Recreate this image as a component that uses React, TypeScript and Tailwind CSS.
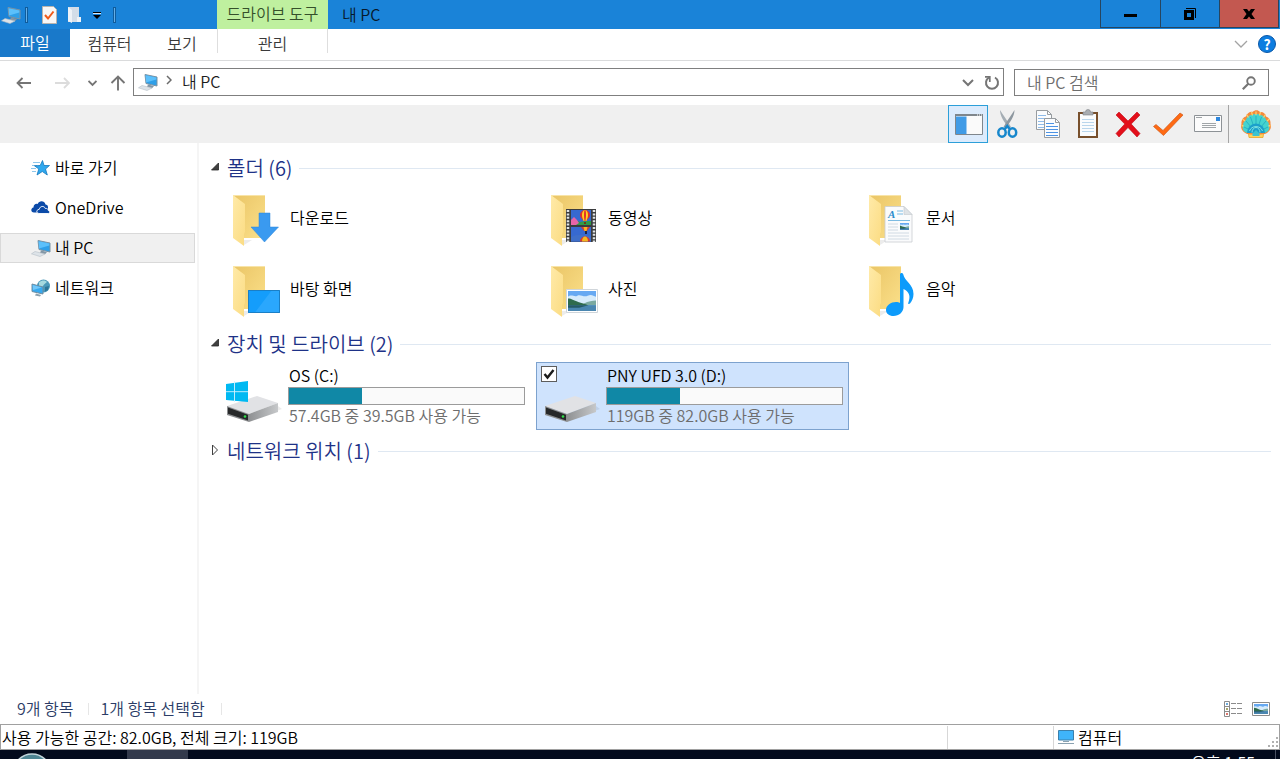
import * as React from "react";
import clsx from "clsx";

type IconProps = { className?: string };

function PcIcon({ className }: IconProps) {
   return (
      <svg viewBox="0 0 20 18" className={className} aria-hidden="true">
         <path d="M7 1.5 19 4v9L8 10.5z" fill="#2f9fe8" stroke="#7d93a3" strokeWidth="1" />
         <path d="M7.6 2.3 18.3 4.6v2L8 9.5z" fill="#5cc0fb" />
         <path d="m10 11.500 6 1.500-2 2.200-5-1.200z" fill="#8296a5" />
         <path d="m4 12.500 10 2.500-5 2.500L.5 14.800z" fill="#dde3e8" stroke="#b4bec6" strokeWidth=".6" />
      </svg>
   );
}

function StarIcon() {
   return (
      <svg viewBox="0 0 20 18" className="h-[18px] w-5" aria-hidden="true">
         <path d="M2 3.500h7M1 6.500h5M0 9.500h5M1 12.500h4" stroke="#8fc6ea" strokeWidth="1" />
         <path
            d="m11.500 1.500 1.500 5h5.500l-4 3.500 1.800 6-5-3.500-5.300 3.500 1.800-6L3.500 6.800l5.700-.3z"
            fill="#2fa8ee"
            stroke="#1577bd"
            strokeWidth=".8"
         />
      </svg>
   );
}

function OneDriveIcon() {
   return (
      <svg viewBox="0 0 20 18" className="h-[18px] w-5" aria-hidden="true">
         <path
            d="M3 13.500C-.5 13.500-.5 9 2.500 8.500c0-3 2.500-4.200 4.200-3.400C8 1.200 13.500 1.200 14.500 5.500c2.500.3 2.500 2 2.500 3v5z"
            fill="#0b4aa8"
         />
         <path
            d="M8 14.500c-3 0-3-4 .3-4.200.5-3.500 5-3.800 6-.8 2-.4 3 .8 3 2 2.200.6 1.700 3-.3 3z"
            fill="#0b4aa8"
            stroke="#fff"
            strokeWidth=".9"
         />
      </svg>
   );
}

function NetworkIcon() {
   return (
      <svg viewBox="0 0 20 18" className="h-[18px] w-5" aria-hidden="true">
         <circle cx="12.500" cy="7" r="6.500" fill="#4b98b8" />
         <path d="M8 3.500c3-3 7-2 8-.5l-3 2.500-2 3-3-1z" fill="#a6d9df" />
         <path d="m14 8 4-1-1 4-3 1.500z" fill="#2c7598" />
         <path d="m1 5 11 3v7L1 12.500z" fill="#37a9ef" stroke="#6f8da1" strokeWidth="1" />
         <path d="m1.700 6 9 2.500L2 11z" fill="#72c8fa" />
         <path d="m5 14.500 5 1.500-1 1.500-5-1z" fill="#8ca1ae" />
      </svg>
   );
}

function Landscape({ x, y, w, h }: { x: number; y: number; w: number; h: number }) {
   return (
      <svg x={x} y={y} width={w} height={h} viewBox="0 0 30 21" preserveAspectRatio="none">
         <path d="M0 0h30v21H0z" fill="#67a9f2" />
         <path d="M0 6c4-3 7 1 10-1s7 2 11 0 6 0 9 1v8H0z" fill="#d6ebfb" />
         <path d="M17 13c5-2 9-3 13-3v5H17z" fill="#7aa9a0" />
         <path d="M0 8c4 0 6 2 11 3.500s8 2 11 4H0z" fill="#2f6b4d" />
         <path d="M0 15h30v6H0z" fill="#4a86b0" />
         <path d="M0 15h22l-10 2.500H0z" fill="#265a66" />
      </svg>
   );
}

function FolderArt({ children }: { children?: React.ReactNode }) {
   return (
      <svg viewBox="0 0 56 56" className="size-14 shrink-0" aria-hidden="true">
         <defs>
            <linearGradient id="folderBack" x1="0" y1="0" x2="1" y2="1">
               <stop offset="0" stopColor="#eac566" />
               <stop offset="1" stopColor="#fbe08a" />
            </linearGradient>
            <linearGradient id="folderFlap" x1="0" y1="0" x2="1" y2="1">
               <stop offset="0" stopColor="#ffeaa8" />
               <stop offset="1" stopColor="#fbdc83" />
            </linearGradient>
         </defs>
         <path d="m16 54 8-5h-8z" fill="#ececec" />
         <path d="M5 4h32v43H5z" fill="url(#folderBack)" />
         <path d="M5 4.500h32" stroke="#f8e4a8" />
         <path d="m5 4 12 9v28l-1 2v12L5 47z" fill="url(#folderFlap)" />
         {children}
      </svg>
   );
}

function DownloadsIcon() {
   return (
      <FolderArt>
         <path d="M31 22h11v14h8.500L36.500 51 23 36h8z" fill="#3a9af0" stroke="#2f86d8" strokeWidth=".5" />
      </FolderArt>
   );
}

function Balloon({ x, y }: { x: number; y: number }) {
   return (
      <g transform={`translate(${x} ${y})`}>
         <path d="M-5 0a5 5 0 0 1 10 0c0 3-3 4-3.500 6h-3c-.5-2-3.500-3-3.500-6z" fill="#e0302a" />
         <path d="M-3 0a3 5 0 0 1 6 0c0 3-1.200 4-1.500 6h-3C-1.800 4-3 3-3 0z" fill="#ffcf1f" />
         <path d="M-1 0a1 5 0 0 1 2 0c0 3-.4 4-.5 6h-1C-.6 4-1 3-1 0z" fill="#e0302a" />
         <path d="M-1 7h2v2h-2z" fill="#6b3d12" />
      </g>
   );
}

function VideosIcon() {
   return (
      <FolderArt>
         <path d="M20 18h30v33H20z" fill="#3b3c3e" />
         <path d="M22 19v32M48 19v32" stroke="#e2e5e7" strokeWidth="2.500" strokeDasharray="2 1.400" />
         <path d="M25 19h20v15H25zM25 36h20v14.500H25z" fill="#3769d0" />
         <path d="M25 31c3-2 6-2 9 0 4-1 8-1 11-1v4H25z" fill="#2f9b46" />
         <path d="m25 29 3-3 3 3 2 3-3 2h-5z" fill="#e765a8" />
         <path d="M25 46c6-3 14-3 20 0v4.500H25z" fill="#3f6fc9" />
         <Balloon x={39} y={24} />
         <path d="M35 36h9l-3 4h-3z" fill="#d43a31" />
         <path d="M37.500 36h4l-1 4h-2z" fill="#f5b820" />
         <path d="M39 40h2v3h-2z" fill="#1d2445" />
         <path d="M34 50.500a5 5 0 0 1 10 0z" fill="#df352b" />
         <path d="M36 50.500a3 5 0 0 1 6 0z" fill="#f5b820" />
      </FolderArt>
   );
}

function DocumentsIcon() {
   return (
      <FolderArt>
         <path d="M21 15.500h19l8 8V51H21z" fill="#fafbfc" stroke="#c9cdd0" strokeWidth=".8" />
         <path d="M40 15.500v8h8z" fill="#dfe3e6" stroke="#c3c8cc" strokeWidth=".6" />
         <text x="24" y="27" className="fill-[#2b8ccc] font-['Liberation_Serif',serif] text-[11px] font-bold italic">
            A
         </text>
         <path d="M33 20h6M33 23h6M24 29.500h22" stroke="#7cbbe2" />
         <path d="M24 33h10M24 36h10M24 39h10M24 42h21M24 45h21M24 48h21" stroke="#c5d3dd" strokeWidth=".8" />
         <Landscape x={36} y={32} w={9} h={7} />
      </FolderArt>
   );
}

function DesktopIcon() {
   return (
      <FolderArt>
         <path d="M20 28h32v23H20z" fill="#149dfb" />
         <path d="M44 28h8v22.500H27z" fill="#2aa7fd" />
         <path d="M20.500 28.500h31v22h-31z" fill="none" stroke="#1a7fc6" />
      </FolderArt>
   );
}

function PicturesIcon() {
   return (
      <FolderArt>
         <path d="M20.500 27.500h31v23h-31z" fill="#fff" stroke="#cfd5da" />
         <Landscape x={22} y={29} w={28} h={20} />
      </FolderArt>
   );
}

function MusicIcon() {
   return (
      <FolderArt>
         <path
            d="M36 12.500c0-2 3-2 3.300 0C40.500 19 49.500 22 49.500 32c0 4-1.500 7-3.500 9.500-1.200 1-2.200.3-1.700-.8C47 34 45 29.500 39.500 27v18c0 5-4.500 9-10 9-4.500 0-7.500-2.500-7.500-6 0-4.500 5-8 10-8 1.500 0 3 .3 4 1z"
            fill="#0d9bfb"
         />
      </FolderArt>
   );
}

function DriveIcon({ system }: { system?: boolean }) {
   return (
      <svg viewBox="0 0 56 44" className="h-11 w-14" aria-hidden="true">
         <defs>
            <linearGradient id="driveSide" x1="0" y1="0" x2="1" y2="0">
               <stop offset="0" stopColor="#8f9193" />
               <stop offset="1" stopColor="#c6c8ca" />
            </linearGradient>
         </defs>
         <path d="m24 42 32-12-4-3-26 10z" fill="#000" opacity=".08" />
         <path d="m1 27 30-10 21 7-29 11z" fill="#e1e2e5" />
         <path d="M52 24v9L23 43v-8z" fill="url(#driveSide)" />
         <path d="m1 27 22 8v8L1 36z" fill="#8c8e90" />
         <path d="m2 28.500 20 7.300v5.700L2 34.800z" fill="#262829" />
         <circle cx="19" cy="37.500" r="1.300" fill="#2fe04a" />
         {system ? (
            <>
               <path d="M0 5 22 2v21L0 21z" fill="#00b9f2" />
               <path d="M8.500 2v21M0 12.700h22" stroke="#d5f3fd" strokeWidth=".9" />
            </>
         ) : null}
      </svg>
   );
}

function ShellIcon() {
   return (
      <svg viewBox="0 0 32 30" className="h-[30px] w-8" aria-hidden="true">
         <path d="M8 21h16l-1 7.500H9z" fill="#ffd45c" stroke="#e8a52a" strokeWidth=".8" />
         <path
            d="M7 25C2 23 0 18 1.500 15 1 11 3.500 8 6 7.500 7 4 10.500 2.300 12.500 3 15 .8 18 .8 20 3c3-.4 5.500 1.500 6 4.500 3 1 5 4 4.500 7.500 1.500 4-1 8-5.500 10l-5 .5H11z"
            fill="#f58a3c"
         />
         <path
            d="M7 24C3 22.500 2 19 3 16.500 3 14 4 12 6 11c.5-2.500 2.500-4.500 5-5 2.500-1.500 7.500-1.500 10 0 2.500.5 4.500 2.500 5 5 2 1 3 3 3 5.500 1 2.500 0 6-4 7.500z"
            fill="#45d3cf"
         />
         <path
            d="M5 12 2.500 10M8.500 8.500 6.500 5.500M12.500 6.500l-1-3.500M16 6V2.500M19.500 6.500l1-3.500M23.500 8.500l2-3M27 12l2.500-2M3.500 17l-2-.5M28.500 17l2-.5"
            stroke="#ffcf6a"
            strokeWidth="1.300"
         />
         <path d="M16 24V7M16 24 10.500 8M16 24l5.500-16M16 24 6 12M16 24l10-12M16 24 4 18M16 24l12-6" stroke="#22a9bd" strokeWidth=".8" />
         <path d="M7 24a9 9.500 0 0 1 18 0z" fill="#1b9fcb" />
         <path d="M9.500 22a7 7 0 0 1 13 0M12 23.500a4 5 0 0 1 8 0" fill="none" stroke="#7ee4e2" strokeWidth="1" />
         <path d="M12.500 24.500 16 21l3.500 3.500V27h-7z" fill="#3cc3cf" />
      </svg>
   );
}

const tools = [
   {
      label: "탐색 창",
      active: true,
      icon: (
         <>
            <path d="M3.500 6.500h27v20h-27z" fill="#fafafa" stroke="#7f868c" />
            <path d="M3 6h28v2H3z" fill="#7f868c" />
            <path d="M4 8.500h10.500V26H4z" fill="#409be6" />
            <path d="M25 7h1M27 7h1M29 7h1" stroke="#fff" />
         </>
      ),
   },
   {
      label: "잘라내기",
      icon: (
         <>
            <path d="M8 2c0 6 4 12 9 18l2-1C15 12 11 7 8 2z" fill="#a4adb4" />
            <path d="M22.500 2c0 6-4 12-9 18l-2-1c4-7 8-12 11-17z" fill="#8d979f" />
            <ellipse cx="10" cy="24.500" rx="3.700" ry="4.200" fill="none" stroke="#1787cc" strokeWidth="2.500" />
            <ellipse cx="20.500" cy="24.500" rx="3.700" ry="4.200" fill="none" stroke="#1787cc" strokeWidth="2.500" />
            <path d="m12.500 21.500 2.800-3.500 2.700 3.500" fill="none" stroke="#1787cc" strokeWidth="2.500" />
         </>
      ),
   },
   {
      label: "복사",
      icon: (
         <>
            <path d="M4.500 2.500h11l4 4v15h-15z" fill="#fafcfe" stroke="#979ca0" />
            <path d="M15.500 2.500v4h4" fill="none" stroke="#979ca0" />
            <path d="M6 7.500h8M6 10.500h11M6 13.500h11M6 16.500h11M6 19.500h11" stroke="#8fbbe9" />
            <path d="M12.500 10.500h11l4 4v15h-15z" fill="#fafcfe" stroke="#979ca0" />
            <path d="M23.500 10.500v4h4" fill="none" stroke="#979ca0" />
            <path d="M14 15.500h8M14 18.500h12M14 21.500h12M14 24.500h12M14 27.500h12" stroke="#4c93e4" />
         </>
      ),
   },
   {
      label: "붙여넣기",
      icon: (
         <>
            <path d="M6 4h20v26H6z" fill="#78502c" />
            <path d="M8 6h16v22H8z" fill="#fafcfd" />
            <path d="M10 11.500h12M10 14.500h12M10 17.500h12M10 20.500h12M10 23.500h12" stroke="#b9d6ec" />
            <path d="M11 7V4h2.500a2.500 2.500 0 0 1 5 0H21v3z" fill="#a9adb1" stroke="#7d8286" strokeWidth=".6" />
         </>
      ),
   },
   {
      label: "삭제",
      icon: (
         <path
            d="m4 7 3-3 9 9 9-9 3 3-8.800 9L28 25.500 25 29l-9-9.500L7 29l-3-3.500 8.800-9.500z"
            fill="#e30f1a"
            stroke="#c00813"
            strokeWidth=".6"
         />
      ),
   },
   {
      label: "속성",
      icon: (
         <path
            d="m1.500 18.500 2.500-2 7 6L28 5l3 2-19.500 20.500z"
            fill="#ff6a13"
            stroke="#cf5a1c"
            strokeWidth=".7"
         />
      ),
   },
   {
      label: "전자 메일",
      icon: (
         <>
            <path d="M2.500 7.500h27v16h-27z" fill="#fcfcfc" stroke="#8d9296" />
            <path d="M24 9h4v4h-4z" fill="#2d87de" />
            <path d="M4 9.500h6M10 15.500h14M10 17.500h14M10 19.500h14" stroke="#a0a5a8" />
         </>
      ),
   },
];

const places = [
   { name: "바로 가기", icon: <StarIcon /> },
   { name: "OneDrive", icon: <OneDriveIcon /> },
   { name: "내 PC", icon: <PcIcon className="h-[18px] w-5" />, selected: true },
   { name: "네트워크", icon: <NetworkIcon /> },
];

const folders = [
   { name: "다운로드", icon: <DownloadsIcon /> },
   { name: "동영상", icon: <VideosIcon /> },
   { name: "문서", icon: <DocumentsIcon /> },
   { name: "바탕 화면", icon: <DesktopIcon /> },
   { name: "사진", icon: <PicturesIcon /> },
   { name: "음악", icon: <MusicIcon /> },
];

const drives = [
   { name: "OS (C:)", info: "57.4GB 중 39.5GB 사용 가능", used: 31, system: true },
   { name: "PNY UFD 3.0 (D:)", info: "119GB 중 82.0GB 사용 가능", used: 31, selected: true },
];

function TitleBar() {
   return (
      <header className="flex h-[29px] items-start bg-[#1a83d8]">
         <div className="flex h-[29px] w-[217px] items-center">
            <PcIcon className="ml-px h-[18px] w-5" />
            <span className="ml-1 h-4 w-[3px] border border-[#0f5c9c] bg-[#65aee6]" />
            <button aria-label="속성" className="ml-3.5">
               <svg viewBox="0 0 16 18" className="h-[18px] w-4">
                  <path d="M.5.500h11l3 3v14H.5z" fill="#f7f7f7" stroke="#b9b4ae" />
                  <path d="m3 9 3 3.500L11.500 5.500" fill="none" stroke="#ef5a1a" strokeWidth="2" />
               </svg>
            </button>
            <button aria-label="새 폴더" className="ml-2.5">
               <svg viewBox="0 0 14 18" className="h-[18px] w-3.5">
                  <path d="M0 1h11v15H0z" fill="#d3dde8" />
                  <path d="m0 1 4 3v13l-4-2zM9 11h4v5H9z" fill="#eef2f7" />
               </svg>
            </button>
            <button aria-label="빠른 실행 도구 모음 사용자 지정" className="ml-[11px]">
               <svg viewBox="0 0 8 8" className="size-2">
                  <path d="M0 1.500h8" stroke="#000" />
                  <path d="M0 2.500h8" stroke="#d7e8f7" />
                  <path d="M0 4h8L4 8z" fill="#000" />
               </svg>
            </button>
            <span className="ml-3 h-4 w-[3px] border border-[#0f5c9c] bg-[#65aee6]" />
         </div>
         <div className="h-[29px] w-[111px] bg-[#bff09f] text-center leading-[26px] text-[#35502a]">드라이브 도구</div>
         <h1 className="ml-3.5 leading-7 text-[#06192b]">내 PC</h1>
         <div className="mr-px ml-auto flex h-7 border border-t-0 border-[#26455f]">
            <button aria-label="최소화" className="grid w-[60px] place-items-center border-r border-[#26455f]">
               <span className="mt-1 h-[3px] w-[13px] bg-black" />
            </button>
            <button aria-label="이전 크기로" className="grid w-[59px] place-items-center border-r border-[#26455f]">
               <svg viewBox="0 0 12 12" className="size-3">
                  <path d="M1.500 3.500h7v7h-7z" fill="none" stroke="#000" strokeWidth="3" />
                  <path d="M2 .5h9.500V10" fill="none" stroke="#000" />
               </svg>
            </button>
            <button aria-label="닫기" className="grid w-[58px] place-items-center bg-[#c35850]">
               <svg viewBox="0 0 12 10" className="h-2.5 w-3">
                  <path d="M0 0h4l2 2.500L8 0h4L8.500 5l3.500 5H8L6 7.500 4 10H0l3.500-5z" fill="#000" />
               </svg>
            </button>
         </div>
      </header>
   );
}

function Ribbon() {
   return (
      <nav className="flex h-8 items-start border-b border-[#dadbdc] text-[#3a3a3a]">
         <button className="h-7 w-[70px] bg-[#1979ca] pb-0.5 text-white">파일</button>
         <button className="h-7 w-[79px]">컴퓨터</button>
         <button className="h-7 w-[66px]">보기</button>
         <button className="ml-0.5 h-6 w-[111px] border-x border-[#dedede] pt-1 leading-5">관리</button>
         <button aria-label="리본 확장" className="mt-2 ml-auto">
            <svg viewBox="0 0 14 14" className="size-3.5">
               <path d="m1 4 6 6 6-6" fill="none" stroke="#a3a3a3" strokeWidth="1.300" />
            </svg>
         </button>
         <button
            aria-label="도움말"
            className="mt-1.5 mr-1 ml-2.5 size-[18px] rounded-full border border-[#0b58a8] bg-[#0d7de0] text-sm leading-4 font-bold text-white">
            ?
         </button>
      </nav>
   );
}

function AddressRow() {
   return (
      <div className="flex h-11 items-center">
         <div className="flex w-[133px] items-center">
            <button aria-label="뒤로" className="ml-4">
               <svg viewBox="0 0 16 12" className="h-3 w-4">
                  <path d="M15 6H1.500M6.500 1l-5 5 5 5" fill="none" stroke="#757575" strokeWidth="1.800" />
               </svg>
            </button>
            <button aria-label="앞으로" className="ml-[22px]">
               <svg viewBox="0 0 16 12" className="h-3 w-4">
                  <path d="M1 6h14M10 1l5 5-5 5" fill="none" stroke="#dcdcdc" strokeWidth="1.800" />
               </svg>
            </button>
            <button aria-label="최근 위치" className="ml-[18px]">
               <svg viewBox="0 0 9 8" className="h-2 w-[9px]">
                  <path d="m.5 2 4 4 4-4" fill="none" stroke="#757575" strokeWidth="1.800" />
               </svg>
            </button>
            <button aria-label="위로" className="ml-[13px]">
               <svg viewBox="0 0 16 16" className="size-4">
                  <path d="M8 15.500V2M1.500 8 8 1.500 14.500 8" fill="none" stroke="#757575" strokeWidth="1.900" />
               </svg>
            </button>
         </div>
         <div className="mb-0.5 flex h-7 grow items-center border border-[#7f7f7f]">
            <PcIcon className="ml-1 h-[18px] w-5" />
            <svg viewBox="0 0 6 10" className="mb-1 ml-2 h-2.5 w-1.5" aria-hidden="true">
               <path d="m1 1 4 4-4 4" fill="none" stroke="#6b6b6b" strokeWidth="1.500" />
            </svg>
            <span className="ml-2.5 pb-0.5 text-[#1c1c1c]">내 PC</span>
            <button aria-label="이전 위치" className="mt-0.5 ml-auto">
               <svg viewBox="0 0 12 8" className="h-2 w-3">
                  <path d="m1 1 5 5 5-5" fill="none" stroke="#757575" strokeWidth="2" />
               </svg>
            </button>
            <button aria-label="새로 고침" className="mt-0.5 mr-[3px] ml-2.5">
               <svg viewBox="0 0 16 16" className="size-4">
                  <path d="M11 2.500A6 6 0 1 1 5 2.500" fill="none" stroke="#757575" strokeWidth="2" />
                  <path d="M1 1.800h4.800V7" fill="none" stroke="#757575" strokeWidth="1.700" />
               </svg>
            </button>
         </div>
         <label className="mr-[11px] mb-px ml-2.5 flex h-[27px] w-[255px] items-center border border-[#7f7f7f]">
            <input
               type="search"
               aria-label="내 PC 검색"
               placeholder="내 PC 검색"
               className="min-w-0 grow bg-transparent pb-0.5 pl-3 outline-none placeholder:text-[#6d6d6d]"
            />
            <svg viewBox="0 0 14 14" className="mr-3 size-3.5" aria-hidden="true">
               <circle cx="9" cy="5" r="3.800" fill="none" stroke="#757575" strokeWidth="1.900" />
               <path d="M6.500 7.500.8 13.200" stroke="#757575" strokeWidth="2.200" />
            </svg>
         </label>
      </div>
   );
}

function ToolBar() {
   return (
      <div className="flex h-[38px] justify-end bg-[#f0f0f0]">
         {tools.map((tool) => (
            <button
               key={tool.label}
               aria-label={tool.label}
               className={clsx(
                  "grid w-10 place-items-center border",
                  tool.active ? "border-[#2c9fd9] bg-[#dcebfc]" : "border-transparent"
               )}>
               <svg viewBox="0 0 32 32" className="size-8">
                  {tool.icon}
               </svg>
            </button>
         ))}
         <button aria-label="Classic Shell" className="grid w-[52px] place-items-center border-l border-[#a5a5a5] pl-0.5">
            <ShellIcon />
         </button>
      </div>
   );
}

function GroupHeading({ title, open = true }: { title: string; open?: boolean }) {
   return (
      <h2 className="mr-[9px] flex h-[31px] items-center text-xl text-[#1e3287]">
         <button aria-label={title} aria-expanded={open} className="mr-2 mb-1 ml-3">
            <svg viewBox="0 0 8 12" className="h-3 w-2">
               {open ? (
                  <path d="M7.500 2v7H.5z" fill="#404040" stroke="#262626" strokeWidth=".8" />
               ) : (
                  <path d="m1.500 1 5 5-5 5z" fill="#fff" stroke="#404040" />
               )}
            </svg>
         </button>
         <span className="pb-0.5">{title}</span>
         <span className="ml-[7px] h-px grow bg-[#dfe8f2]" />
      </h2>
   );
}

function DriveTile({ drive }: { drive: (typeof drives)[number] }) {
   return (
      <li
         className={clsx(
            "flex h-[68px] border",
            drive.selected ? "border-[#7da2ce] bg-[#cfe3fd]" : "border-transparent"
         )}>
         <div className="relative flex w-[69px] flex-col justify-end pb-1.5 pl-[7px]">
            {drive.selected ? (
               <label className="absolute top-[3px] left-1 size-4">
                  <input
                     type="checkbox"
                     defaultChecked
                     aria-label={drive.name}
                     className="peer block size-4 appearance-none border border-[#5d5d5d] bg-white"
                  />
                  <svg
                     viewBox="0 0 16 16"
                     className="pointer-events-none absolute inset-0 hidden size-4 peer-checked:block">
                     <path d="m3.500 8 3 3.500L12.500 4" fill="none" stroke="#1b1b1b" strokeWidth="2.400" />
                  </svg>
               </label>
            ) : null}
            <DriveIcon system={drive.system} />
         </div>
         <div className="w-[237px] pt-0.5 leading-5">
            <p className="pl-px text-black">{drive.name}</p>
            <div
               role="progressbar"
               aria-label={drive.name}
               aria-valuenow={drive.used}
               className="mt-0.5 h-[18px] border border-[#9b9b9b] bg-[#fafafa]">
               <div className="h-full bg-[#1088a6]" style={{ width: `${drive.used}%` }} />
            </div>
            <p className="pl-px text-[#6d6d6d]">{drive.info}</p>
         </div>
      </li>
   );
}

function StatusBars() {
   return (
      <>
         <div className="flex h-[30px] items-center text-[#2b3c66]">
            <span className="ml-[17px] pb-0.5">9개 항목</span>
            <span className="mr-3 ml-3.5 h-3 w-px bg-[#e6e6e6]" />
            <span className="pb-0.5">1개 항목 선택함</span>
            <span className="ml-4 h-3 w-px bg-[#e6e6e6]" />
            <button aria-label="자세히" className="ml-auto">
               <svg viewBox="0 0 18 16" className="h-4 w-[18px]">
                  <path d="M.5.5h5v15h-5zM.5 5.500h5M.5 10.500h5" fill="#fff" stroke="#8b8b8b" />
                  <path d="M2 3h2" stroke="#3c8fd0" strokeWidth="1.500" />
                  <path d="M2 8h2" stroke="#8a8a3c" strokeWidth="1.500" />
                  <path d="M2 13h2" stroke="#d04a3c" strokeWidth="1.500" />
                  <path d="M7 2.500h5M13 2.500h5M7 7.500h5M13 7.500h5M7 12.500h5M13 12.500h5" stroke="#8b8b8b" />
               </svg>
            </button>
            <button aria-label="큰 아이콘" className="mr-2.5 ml-2.5">
               <svg viewBox="0 0 18 14" className="h-3.5 w-[18px]">
                  <path d="M.5.5h17v13H.5z" fill="#fff" stroke="#8b8b8b" />
                  <Landscape x={2} y={2} w={14} h={10} />
               </svg>
            </button>
         </div>
         <div className="flex h-[26px] items-center border border-[#a0a0a0] text-black">
            <span className="grow pl-px">사용 가능한 공간: 82.0GB, 전체 크기: 119GB</span>
            <span className="h-[23px] w-[107px] border-x border-[#d7d7d7]" />
            <span className="flex w-[213px] items-center gap-1 pl-1">
               <svg viewBox="0 0 16 16" className="size-4" aria-hidden="true">
                  <path d="M.5 1.500h15v9.500H.5z" fill="#3fb4fa" stroke="#3c80ab" />
                  <path d="M5 12.500h6M0 14.500h16" stroke="#8ba2b1" />
               </svg>
               컴퓨터
            </span>
            <svg viewBox="0 0 12 12" className="size-3 self-end" aria-hidden="true">
               <path
                  d="M9 0h2v2H9zM9 4h2v2H9zM5 4h2v2H5zM9 8h2v2H9zM5 8h2v2H5zM1 8h2v2H1z"
                  fill="#b0b0b0"
               />
            </svg>
         </div>
      </>
   );
}

function TaskBar() {
   return (
      <footer className="flex h-[9px] items-start overflow-hidden bg-[#020a1c]">
         <svg viewBox="0 0 36 6" className="mt-[3px] ml-3.5 h-1.5 w-9" aria-hidden="true">
            <circle cx="18" cy="20" r="19" fill="#4e8593" stroke="#c3d6dc" strokeWidth="1.500" />
         </svg>
         <span className="ml-[77px] h-full w-[61px] bg-[#333a4c]" />
         <time className="mr-5 ml-auto pt-0.5 leading-5 text-white">오후 1:55</time>
         <span className="mr-1 h-full w-px bg-[#4a5162]" />
      </footer>
   );
}

export default function App() {
   return (
      <div className="flex min-h-screen flex-col bg-white font-['Noto_Sans_CJK_KR',sans-serif] text-base font-[350]">
         <TitleBar />
         <Ribbon />
         <AddressRow />
         <ToolBar />
         <div className="flex grow">
            <nav className="w-[199px] shrink-0 border-r-2 border-[#f5f5f5] pt-2.5">
               <ul className="flex flex-col gap-2.5">
                  {places.map((place) => (
                     <li key={place.name}>
                        <a
                           href="#"
                           className={clsx(
                              "mr-0.5 flex h-[30px] items-center gap-1 border pl-[30px] text-black",
                              place.selected ? "border-[#d9d9d9] bg-[#f0f0f0]" : "border-transparent"
                           )}>
                           {place.icon}
                           <span className="pb-0.5">{place.name}</span>
                        </a>
                     </li>
                  ))}
               </ul>
            </nav>
            <main className="min-w-0 grow pt-2.5">
               <GroupHeading title="폴더 (6)" />
               <ul className="ml-[19px] grid grid-cols-[repeat(auto-fill,313px)] gap-x-[5px]">
                  {folders.map((folder) => (
                     <li key={folder.name} className="flex h-[71px] items-center gap-1.5 pb-px pl-2.5 text-black">
                        {folder.icon}
                        <span className="pb-1">{folder.name}</span>
                     </li>
                  ))}
               </ul>
               <div className="mt-[3px]">
                  <GroupHeading title="장치 및 드라이브 (2)" />
               </div>
               <ul className="mt-0.5 mb-1.5 ml-[19px] grid grid-cols-[repeat(auto-fill,313px)] gap-x-[5px]">
                  {drives.map((drive) => (
                     <DriveTile key={drive.name} drive={drive} />
                  ))}
               </ul>
               <GroupHeading title="네트워크 위치 (1)" open={false} />
            </main>
         </div>
         <StatusBars />
         <TaskBar />
      </div>
   );
}
